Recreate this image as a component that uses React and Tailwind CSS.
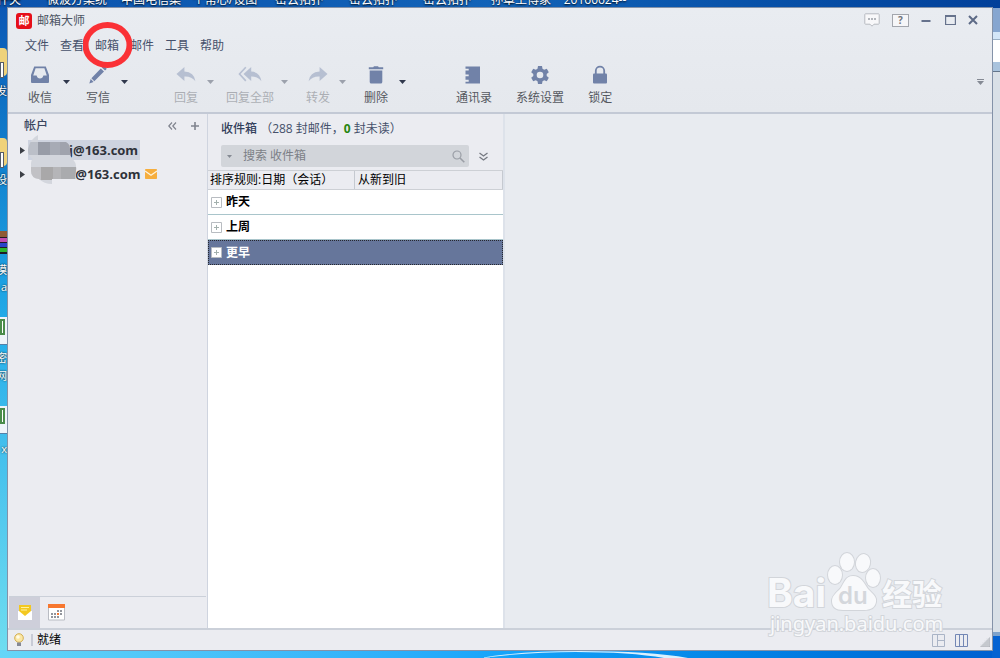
import { useState } from "react";

const desktopLabels = [
  "文件夹",
  "微波方案统",
  "中国电信集",
  "个常心/设图",
  "密云拓扑",
  "密云拓扑",
  "密云拓扑",
  "孙章土傅家",
  "20160624--"
];

const menus = ["文件", "查看", "邮箱", "邮件", "工具", "帮助"];

const toolbar = [
  { id: "receive", label: "收信", arrow: "ml-2.5", space: "" },
  { id: "compose", label: "写信", arrow: "ml-2.5", space: "ml-4" },
  { id: "reply", label: "回复", arrow: "ml-2", space: "ml-[46px]", disabled: true },
  { id: "replyAll", label: "回复全部", arrow: "ml-1.5", space: "ml-3", disabled: true },
  { id: "forward", label: "转发", arrow: "ml-2", space: "ml-[18px]", disabled: true },
  { id: "delete", label: "删除", arrow: "ml-2.5", space: "ml-[18px]" },
  { id: "contacts", label: "通讯录", space: "ml-[50px]" },
  { id: "settings", label: "系统设置", space: "ml-6" },
  { id: "lock", label: "锁定", space: "ml-6" }
];

const accounts = [
  { id: 1, address: "j@163.com", selected: true },
  { id: 2, address: "z@163.com", unread: true }
];

const groups = ["昨天", "上周", "更早"];

function ToolIcon({ id }) {
  const box = { width: 20, height: 20, viewBox: "0 0 20 20", fill: "#7182a8", "aria-hidden": true };

  switch (id) {
    case "receive":
      return (
        <svg {...box}>
          <path
            fillRule="evenodd"
            d="M4.2 1.5h11.6L19 10v7q0 1-1 1H2q-1 0-1-1v-7zM5.6 3.3 3.2 10.6H6.6q.7 3 3.4 3t3.4-3h3.4L14.4 3.3z"
          />
        </svg>
      );
    case "compose":
      return (
        <svg {...box}>
          <path d="M3.4 13.2 12.8 3.4l3.2 3.2-9.7 9.6zM2.7 14.1l2.9 2.9-4.3 1.5zM13.8 2.4l1.2-1.2q.9-.7 1.8.1l1.4 1.4q.8.9 0 1.8L17 5.6z" />
        </svg>
      );
    case "reply":
      return (
        <svg {...box}>
          <path d="M8.4 2v4.5q9.8.4 11 9.8-3.9-5.1-11-4.7v4.5L.5 9z" />
        </svg>
      );
    case "replyAll":
      return (
        <svg {...box} width="24" viewBox="0 0 24 20">
          <path d="M13.2 2v4.5q8.800.5 10.200 9.800-3.600-5-10.200-4.700v4.500L5.500 9z" />
          <path d="M7.8 2.2 1.5 9l6.3 6.9" fill="none" stroke="#7182a8" strokeWidth="1.6" />
        </svg>
      );
    case "forward":
      return (
        <svg {...box}>
          <path d="M11.6 2v4.5q-9.8.4-11 9.8 3.9-5.1 11-4.7v4.5L19.5 9z" />
        </svg>
      );
    case "delete":
      return (
        <svg {...box}>
          <path d="M2.8 2.3h4.4l.8-1h4l.8 1h4.4v2H2.8zM3.7 5.4h12.6v11.5q0 1.6-1.6 1.6H5.3q-1.6 0-1.6-1.6z" />
        </svg>
      );
    case "contacts":
      return (
        <svg {...box}>
          <path d="M1.500 1.500H16v17H1.500v-1.800h3.200v-1.900H1.500v-3.500h3.200V9.400H1.500V5.500h3.200V3.800H1.500z" />
        </svg>
      );
    case "settings":
      return (
        <svg {...box}>
          <path
            fillRule="evenodd"
            d="M8 1h4l.5 2.7 1.7 1 2.6-1 2 3.5-2.1 1.7v2.2l2.1 1.7-2 3.5-2.6-1-1.7 1L12 19H8l-.5-2.7-1.7-1-2.6 1-2-3.5 2.1-1.7V8.900L1.200 7.200l2-3.500 2.600 1 1.700-1zM10 6.700a3.300 3.300 0 1 0 0 6.600 3.300 3.300 0 1 0 0-6.600z"
          />
        </svg>
      );
    default:
      return (
        <svg {...box}>
          <rect x="3" y="8.500" width="14" height="10" rx="1" />
          <path d="M5.800 9V5.800a4.200 4.200 0 0 1 8.400 0V9" fill="none" stroke="#7182a8" strokeWidth="1.800" />
        </svg>
      );
  }
}

function ToolButton({ item }) {
  const tone = item.disabled ? "opacity-40" : "";

  return (
    <div className={`flex shrink-0 ${item.space}`}>
      <button type="button" disabled={item.disabled} className={`flex flex-col items-center gap-[5px] ${tone}`}>
        <ToolIcon id={item.id} />
        <span className="text-[12px] leading-[16px] whitespace-nowrap text-[#55585f]">{item.label}</span>
      </button>
      {item.arrow ? (
        <button
          type="button"
          aria-label={`${item.label} 选项`}
          disabled={item.disabled}
          className={`flex h-[30px] w-2 items-center justify-center pt-1 ${item.arrow} ${tone}`}
        >
          <svg width="7" height="4" viewBox="0 0 7 4">
            <path d="M0 0h7L3.500 4z" fill="#30384c" />
          </svg>
        </button>
      ) : null}
    </div>
  );
}

function WindowControls() {
  return (
    <div className="flex h-4 items-center pr-3.5">
      <button type="button" aria-label="反馈">
        <svg width="16" height="14" viewBox="0 0 16 14">
          <path d="M1.500.8h13q.7 0 .7.700v9q0 .7-.7.7H10l-2 2-2-2H1.500q-.7 0-.7-.7v-9q0-.7.7-.7z" fill="#f8f8fa" stroke="#b7bac0" />
          <path d="M4 5h2v2H4zM7 5h2v2H7zM10 5h2v2h-2z" fill="#b2b5bb" />
        </svg>
      </button>
      <button type="button" aria-label="帮助" className="ml-3 h-[13px] w-[17px] border border-[#a3a6ad] bg-[#f6f6f8] text-[10px] leading-[11px] font-bold text-[#70737b]">
        ?
      </button>
      <button type="button" aria-label="最小化" className="ml-3">
        <svg width="10" height="12" viewBox="0 0 10 12">
          <path d="M.5 6h9v2h-9z" fill="#66728c" />
        </svg>
      </button>
      <button type="button" aria-label="最大化" className="ml-3.5">
        <svg width="11" height="10" viewBox="0 0 11 10">
          <path d="M.6.500h9.800v9H.6z" fill="none" stroke="#66728c" strokeWidth="1.200" />
          <path d="M0 0h11v2H0z" fill="#66728c" />
        </svg>
      </button>
      <button type="button" aria-label="关闭" className="ml-3">
        <svg width="10" height="10" viewBox="0 0 10 10">
          <path d="m1 1 8 8M9 1 1 9" stroke="#5d6a86" strokeWidth="2" />
        </svg>
      </button>
    </div>
  );
}

function Header() {
  return (
    <header className="border-b-2 border-[#c3c9d5] bg-linear-to-b from-[#e9ecf1] to-[#e5e8ed]">
      <div className="flex h-[29px] items-start justify-between pt-1">
        <div className="flex h-[18px] items-center gap-[5px] pl-2">
          <span className="flex h-4 w-4 items-center justify-center rounded-[3px] bg-[#e60f19] text-[11px] leading-4 font-bold text-white">
            邮
          </span>
          <h1 className="text-[12px] leading-[16px] text-[#4c5463]">邮箱大师</h1>
        </div>
        <WindowControls />
      </div>
      <nav className="flex gap-[11px] pl-[17px]">
        {menus.map((menu) => (
          <div key={menu} className="relative flex">
            <button type="button" className="text-[12px] leading-[18px] text-[#46516b]">
              {menu}
            </button>
            {menu === "邮箱" ? (
              <svg className="pointer-events-none absolute -top-4 -left-3 z-10" width="52" height="48" viewBox="0 0 52 48">
                <ellipse cx="24.500" cy="24" rx="22" ry="20" fill="none" stroke="#fa3136" strokeWidth="6" />
              </svg>
            ) : null}
          </div>
        ))}
      </nav>
      <div className="flex h-[57px] items-start justify-between pt-2.5 pr-2 pl-5">
        <div className="flex">
          {toolbar.map((item) => (
            <ToolButton key={item.id} item={item} />
          ))}
        </div>
        <button type="button" aria-label="更多" className="mt-3.5">
          <svg width="7" height="6" viewBox="0 0 7 6">
            <path d="M0 0h7v1H0zM0 2h7L3.500 6z" fill="#858a94" />
          </svg>
        </button>
      </div>
    </header>
  );
}

function Mosaic() {
  return (
    <svg className="pointer-events-none absolute -top-1 left-5 z-10" width="50" height="52" viewBox="0 0 50 52" aria-hidden="true">
      <clipPath id="smudge">
        <path d="M10 1v7h28q4 2 4 7 0 7 2 10 5 3 4 12l-1 8H24v5q-8 0-13-5-8-1-8-8V30q0-4 2-5-6-4-5-10Q2 5 10 1z" />
      </clipPath>
      <g clipPath="url(#smudge)">
        <path d="M0 0h50v52H0z" fill="#d3d6dd" />
        <path d="M0 8h13v13H0z" fill="#bbbfc8" />
        <path d="M10 8h15v13H10z" fill="#989ca7" />
        <path d="M22 8h12v13H22z" fill="#a7abb5" />
        <path d="M32 8h18v13H32z" fill="#a0a3ad" />
        <path d="M0 33h14v13H0z" fill="#c1c1c5" />
        <path d="M13 33h12v13H13z" fill="#a9a8a9" />
        <path d="M25 33h9v13h-9z" fill="#b5b5b8" />
        <path d="M33 33h17v13H33z" fill="#aaabae" />
      </g>
    </svg>
  );
}

function Sidebar() {
  return (
    <aside className="flex w-[200px] shrink-0 flex-col border-r border-[#cfd4df] bg-[#ebecf1]">
      <div className="flex h-6 items-center pr-2 pl-4">
        <h2 className="grow text-[12px] leading-4 font-medium text-[#3a465f]">帐户</h2>
        <button type="button" aria-label="收起">
          <svg width="9" height="8" viewBox="0 0 9 8">
            <path d="M4 .5.800 4 4 7.500M8 .5 4.800 4 8 7.500" fill="none" stroke="#80848e" strokeWidth="1.200" />
          </svg>
        </button>
        <button type="button" aria-label="添加帐户" className="ml-3.5">
          <svg width="8" height="8" viewBox="0 0 8 8">
            <path d="M3.200 0h1.600v3.200H8v1.600H4.800V8H3.200V4.800H0V3.200h3.200z" fill="#80848e" />
          </svg>
        </button>
      </div>
      <ul className="relative">
        {accounts.map((account) => (
          <li key={account.id} className="flex h-6 items-center pl-3">
            <button type="button" aria-label="展开" className="w-2">
              <svg width="5" height="7" viewBox="0 0 5 7">
                <path d="M0 0v7l5-3.500z" fill="#3c3f46" />
              </svg>
            </button>
            <button
              type="button"
              className={`flex h-5 items-center pl-[41px] text-[13px] leading-[18px] font-bold text-[#2e323a] ${account.selected ? "bg-[#ced3df] pr-0.5" : "pr-0.5"}`}
            >
              {account.address}
            </button>
            {account.unread ? (
              <svg className="ml-0.5" width="12" height="10" viewBox="0 0 12 10">
                <rect width="12" height="10" rx=".8" fill="#f6ae3e" />
                <path d="m0 2 6 4.200L12 2" fill="none" stroke="#fff3dc" strokeWidth="1.300" />
              </svg>
            ) : null}
          </li>
        ))}
        <li role="presentation">
          <Mosaic />
        </li>
      </ul>
      <div className="mt-auto mr-px ml-px flex h-8 border-t border-[#cbd0d9]">
        <button type="button" aria-label="邮件" className="flex w-[31px] items-center justify-center bg-[#cecfda]">
          <svg width="16" height="17" viewBox="0 0 16 17">
            <path d="M1 7h14v9H1z" fill="#fff" />
            <path d="M2 1h12v6l-6 5-6-5z" fill="#f3c821" />
            <path d="M4 3.500h8M4 6h6" stroke="#fff2a3" />
          </svg>
        </button>
        <button type="button" aria-label="日历" className="flex w-8 items-center justify-center">
          <svg width="17" height="17" viewBox="0 0 17 17">
            <path d="M.5 1h16v15H.5z" fill="#fff" stroke="#b9bcc3" />
            <path d="M0 0h17v4H0z" fill="#f7772f" />
            <path d="M9 6h2v2H9zM12 6h2v2h-2zM3 9h2v2H3zM6 9h2v2H6zM12 9h2v2h-2zM3 12h2v2H3zM6 12h2v2H6zM9 12h2v2H9z" fill="#92959c" />
            <path d="M9 9h2v2H9z" fill="#f7772f" />
          </svg>
        </button>
      </div>
    </aside>
  );
}

function MailList() {
  const [selected, setSelected] = useState("更早");

  return (
    <section className="flex w-[297px] shrink-0 flex-col border-r-2 border-[#dde2ea] bg-white">
      <div className="bg-[#ebecf1] pt-[7px] pb-[3px] pl-[13px]">
        <h2 className="text-[12px] leading-[16px] text-[#46516b]">
          <span className="font-medium text-[#33405c]">收件箱</span> （288 封邮件，
          <b className="text-[#28860f]">0</b> 封未读）
        </h2>
        <div className="mt-2 flex items-center">
          <div className="flex h-[22px] w-[248px] items-center rounded-xs bg-[#d2d5da] pr-1 pl-1.5">
            <svg width="5" height="3" viewBox="0 0 5 3">
              <path d="M0 0h5L2.500 3z" fill="#858a93" />
            </svg>
            <input
              aria-label="搜索 收件箱"
              placeholder="搜索 收件箱"
              className="ml-[11px] min-w-0 grow bg-transparent text-[12px] leading-[18px] outline-none placeholder:text-[#7c7f86]"
            />
            <svg width="13" height="13" viewBox="0 0 13 13">
              <circle cx="5" cy="5" r="4" fill="none" stroke="#9a9ea6" strokeWidth="1.200" />
              <path d="m8 8 4.300 4.300" stroke="#9a9ea6" strokeWidth="1.600" />
            </svg>
          </div>
          <button type="button" aria-label="高级搜索" className="ml-2.5">
            <svg width="9" height="9" viewBox="0 0 9 9">
              <path d="m.5 1 4 3 4-3M.5 5l4 3 4-3" fill="none" stroke="#757981" strokeWidth="1.300" />
            </svg>
          </button>
        </div>
      </div>
      <div className="flex h-5 border-y border-[#cdd0d5] bg-[#ebecf1] text-[12px] leading-[18px] text-black">
        <button type="button" className="w-[147px] border-r border-[#c5c9d0] pl-0.5 text-left">
          排序规则:日期（会话）
        </button>
        <button type="button" className="grow border-r border-[#c5c9d0] pl-[3px] text-left">
          从新到旧
        </button>
      </div>
      <ul>
        {groups.map((group) => (
          <li key={group}>
            <button
              type="button"
              onClick={() => setSelected(group)}
              className={
                group === selected
                  ? "flex h-[25px] w-full items-center gap-1 border border-dotted border-[#26282f] bg-[#66769b] pl-0.5 text-[12px] font-bold text-white"
                  : "flex h-[25px] w-full items-center gap-1 border-b border-[#a9c5cb] pl-[3px] text-[12px] font-bold text-black"
              }
            >
              <svg width="11" height="11" viewBox="0 0 11 11">
                <path d="M.5.500h10v10H.5z" fill="#fff" stroke="#b8bcc1" />
                <path d="M3 5.500h5M5.500 3v5" stroke="#a3b0ad" />
              </svg>
              {group}
            </button>
          </li>
        ))}
      </ul>
    </section>
  );
}

function StatusBar() {
  return (
    <footer className="flex h-[22px] items-center border-t-2 border-[#cbd0d9] bg-[#ebecf1] pr-0.5 pl-1.5">
      <svg width="10" height="14" viewBox="0 0 10 14">
        <circle cx="5" cy="5" r="4.300" fill="#fbe7a5" stroke="#d3ae52" />
        <circle cx="4" cy="4" r="1.800" fill="#fffbe8" />
        <path d="M3 9.500h4V13H3z" fill="#858894" />
      </svg>
      <span className="ml-[7px] h-3 w-0.5 bg-[#c8cbd6]" />
      <span className="ml-1 text-[12px] leading-[16px] text-black">就绪</span>
      <div className="ml-auto flex items-end">
        <button type="button" aria-label="分栏视图">
          <svg width="13" height="13" viewBox="0 0 13 13">
            <path d="M.5.500h12v12H.5zM5.500.500v12M5.500 6.500h7" fill="none" stroke="#aab4c6" />
          </svg>
        </button>
        <button type="button" aria-label="三栏视图" className="ml-2.5">
          <svg width="13" height="13" viewBox="0 0 13 13">
            <path d="M.5.500h12v12H.5zM4.500.500v12M8.500.500v12" fill="none" stroke="#7387b5" />
          </svg>
        </button>
        <svg className="ml-3" width="10" height="10" viewBox="0 0 10 10">
          <path d="M10 0v10H0z" fill="#b2b5bc" />
          <path d="M2 10V8M4 10V6M6 10V4M8 10V2M0 8h10M2 6h8M4 4h6M6 2h4" stroke="#d9dbe0" strokeWidth=".6" />
        </svg>
      </div>
    </footer>
  );
}

function Watermark() {
  const ink = { fill: "#f8f9fb", stroke: "#d2d5da", strokeWidth: 2, paintOrder: "stroke" };

  return (
    <svg className="pointer-events-none absolute right-10 bottom-2 z-20" width="186" height="92" viewBox="0 0 186 92" role="img" aria-label="Baidu 经验">
      <text x="1" y="57" fontFamily="Inter, Liberation Sans, sans-serif" fontSize="39" fontWeight="700" {...ink}>
        Bai
      </text>
      <g {...ink}>
        <ellipse cx="69" cy="25" rx="7" ry="9" />
        <ellipse cx="81" cy="12" rx="7" ry="9" />
        <ellipse cx="97" cy="13" rx="7" ry="9" transform="rotate(12 97 13)" />
        <ellipse cx="107" cy="28" rx="7" ry="9" />
        <path d="M87 26c8 0 11 7 15 13 5 5 9 8 8 13-1 6-6 8-12 8H77c-7 0-11-3-11-9 0-5 4-8 8-12 4-5 5-13 13-13z" />
      </g>
      <text x="72" y="54" fontFamily="Inter, Liberation Sans, sans-serif" fontSize="24" fontWeight="600" fill="#d4d7dc">
        du
      </text>
      <text x="116" y="55" fontFamily="Noto Sans CJK SC, sans-serif" fontSize="30" fontWeight="700" {...ink}>
        经验
      </text>
      <text x="4" y="81" fontFamily="Noto Sans, sans-serif" fontSize="20" {...ink}>
        jingyan.baidu.com
      </text>
    </svg>
  );
}

function Desktop() {
  return (
    <div aria-hidden="true" className="absolute inset-0 overflow-hidden">
      <div className="absolute inset-x-0 top-0 h-2 bg-linear-to-r from-[#0c54ae] via-[#1263b8] to-[#02409a]" />
      <div className="absolute bottom-0 left-0 top-2 w-2 bg-linear-to-b from-[#0c58b5] via-[#23aeea] to-[#70def0]" />
      <div className="absolute inset-x-0 bottom-0 h-2 bg-linear-to-r from-[#64d6f8] via-[#16a4fa] to-[#005fd0]" />
      <svg className="absolute bottom-0 left-[480px]" width="220" height="8" viewBox="0 0 220 8">
        <path d="M0 8Q40 1 100 1q70 0 108 7h-24Q150 2 96 2 50 2 0 8z" fill="#d9f1ff" />
      </svg>
      <div className="absolute top-2 right-0 bottom-0 flex w-2 flex-col">
        <div className="h-6 bg-[#86a6d0]" />
        <div className="h-2 border-b border-[#9ab0c5] bg-[#d3e6f8]" />
        <div className="h-[22px] bg-white" />
        <div className="h-2.5 border-b border-[#64758a] bg-[#a9c3dd]" />
        <div className="grow border-b-4 border-[#7fa3cb] bg-[#d9e0e7]" />
        <div className="h-[22px] bg-[#0663d2]" />
      </div>
      <div className="absolute top-12 left-0 h-7 w-[7px] rounded-r-sm bg-[#efd27a]" />
      <div className="absolute top-[62px] left-0 h-4 w-1 border border-[#555c68] bg-white" />
      <div className="absolute top-[138px] left-0 h-7 w-[7px] rounded-r-sm bg-[#efd27a]" />
      <div className="absolute top-[152px] left-0 h-4 w-1 border border-[#555c68] bg-white" />
      <div className="absolute top-[231px] left-0 flex h-[23px] w-[7px] flex-col gap-px bg-[#211b26]">
        <div className="h-1.5 bg-[#8e5a35]" />
        <div className="h-1 bg-[#c04bb0]" />
        <div className="h-1 bg-[#2a45c8]" />
        <div className="h-1 bg-[#2bb52e]" />
      </div>
      {[317, 406].map((top) => (
        <div key={top} className="absolute left-0 h-7 w-[7px] border-b border-[#5580a8] bg-[#eff4fa]" style={{ top }}>
          <div className="mt-0.5 h-4 w-[5px] border-2 border-[#4a8c4b] bg-white" />
        </div>
      ))}
      {[
        ["发", 83],
        ["设", 172],
        ["模", 262],
        ["a", 279],
        ["密", 350],
        ["网", 368],
        ["x", 441]
      ].map(([text, top]) => (
        <span key={top} className="absolute right-full -mr-[7px] text-[11px] leading-[15px] text-white text-shadow-[0_0_2px_#000]" style={{ top }}>
          {text}
        </span>
      ))}
    </div>
  );
}

export default function App() {
  return (
    <div className="relative flex min-h-screen flex-col bg-[#168fe0] px-[7px] pb-[7px] font-['Open_Sans','Noto_Sans_CJK_SC',sans-serif]">
      <Desktop />
      <div className="relative -mx-[7px] flex h-[7px] items-end overflow-hidden" aria-hidden="true">
        <div className="-ml-[34px] flex">
          {desktopLabels.map((label, index) => (
            <span key={index} className="w-[74px] shrink-0 text-center text-[12px] leading-[14px] whitespace-nowrap text-white text-shadow-[0_1px_2px_#000]">
              {label}
            </span>
          ))}
        </div>
      </div>
      <main className="relative flex grow flex-col border border-[#8492a8] bg-[#ebecf1]">
        <Header />
        <div className="flex grow">
          <Sidebar />
          <MailList />
          <section className="grow bg-[#e8ebf0]" aria-label="邮件内容" />
        </div>
        <StatusBar />
        <Watermark />
      </main>
    </div>
  );
}
